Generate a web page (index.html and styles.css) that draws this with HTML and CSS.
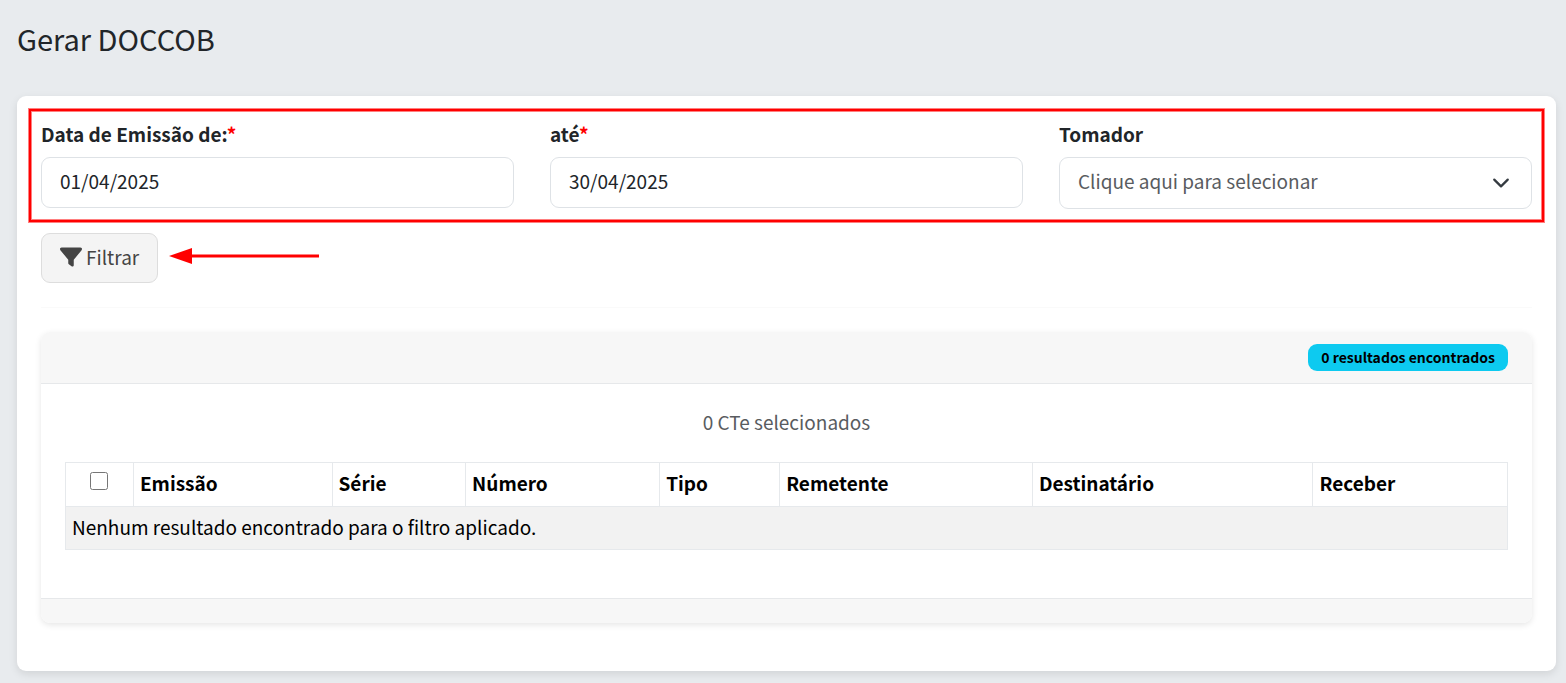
FILE: index.html
```html
<!DOCTYPE html>
<html lang="pt-BR">
<head>
  <title>Gerar DOCCOB</title>
  <meta charset="utf-8">
  <meta name="viewport" content="width=device-width, initial-scale=1.0">
  <link rel="stylesheet" href="styles.css">
</head>
<body>
<h1 class="page-title">Gerar DOCCOB</h1>
<main class="panel">
  <form class="filter">
    <div class="filter-row">
      <div class="field">
        <label for="dataDe">Data de Emissão de:<span class="required">*</span></label>
        <input id="dataDe" class="control" type="text" value="01/04/2025">
      </div>
      <div class="field">
        <label for="dataAte">até<span class="required">*</span></label>
        <input id="dataAte" class="control" type="text" value="30/04/2025">
      </div>
      <div class="field">
        <label for="tomador">Tomador</label>
        <div class="select-wrap">
          <select id="tomador" class="control">
            <option>Clique aqui para selecionar</option>
          </select>
          <svg class="chevron" viewBox="0 0 16 16" aria-hidden="true">
            <path d="M2 5l6 6 6-6" fill="none" stroke="#343a40" stroke-width="2" stroke-linecap="round" stroke-linejoin="round"/>
          </svg>
        </div>
      </div>
      <div class="highlight"></div>
    </div>
    <div class="actions">
      <button class="btn" type="button">
        <svg class="icon" viewBox="0 0 512 512" aria-hidden="true">
          <path fill="currentColor" d="M3.900 54.900C10.500 40.900 24.500 32 40 32H472c15.500 0 29.500 8.900 36.100 22.900s4.600 30.500-5.200 42.500L320 320.900V448c0 12.100-6.800 23.200-17.700 28.600s-23.800 4.300-33.500-3l-64-48c-8.100-6-12.800-15.500-12.800-25.600V320.900L9 97.300C-.7 85.400-2.800 68.800 3.900 54.900z"/>
        </svg>
        Filtrar
      </button>
      <svg class="arrow" viewBox="0 0 150 16" aria-hidden="true">
        <path d="M0 8L23 0V16z" fill="#f00"/>
        <path d="M20 8H150" stroke="#f00" stroke-width="3"/>
      </svg>
    </div>
  </form>
  <hr class="divider">
  <section class="card">
    <div class="card-header">
      <span class="badge">0 resultados encontrados</span>
    </div>
    <div class="card-body">
      <p class="selected">0 CTe selecionados</p>
      <table class="results">
        <thead>
          <tr>
            <th class="check"><input type="checkbox" aria-label="Selecionar todos"></th>
            <th>Emissão</th>
            <th>Série</th>
            <th>Número</th>
            <th>Tipo</th>
            <th>Remetente</th>
            <th>Destinatário</th>
            <th>Receber</th>
          </tr>
        </thead>
        <tbody>
          <tr>
            <td colspan="8">Nenhum resultado encontrado para o filtro aplicado.</td>
          </tr>
        </tbody>
      </table>
    </div>
    <div class="card-footer"></div>
  </section>
</main>
</body>
</html>
```

FILE: styles.css
```css
* {
  box-sizing: border-box;
}

body {
  margin: 0;
  padding: 20px 10px 12px 17px;
  background-color: #e8ebee;
  color: #212529;
  font-family: "Noto Sans CJK SC", "Open Sans", sans-serif;
  font-size: 19px;
  line-height: 28px;
}

.page-title {
  margin: 0 0 40px;
  font-size: 29px;
  font-weight: 400;
  line-height: 36px;
}

.panel {
  padding: 24px 24px 48px;
  background-color: #fff;
  border-radius: 9px;
  box-shadow: 0 3px 9px rgba(0, 0, 0, 0.1);
}

.filter-row {
  position: relative;
  display: grid;
  grid-template-columns: repeat(3, 1fr);
  gap: 36px;
}

.field label {
  display: block;
  margin-bottom: 9px;
  font-weight: 700;
}

.required {
  color: #f00;
}

.control {
  display: block;
  width: 100%;
  height: 51px;
  padding: 0 18px 4px;
  border: 1px solid #dee2e6;
  border-radius: 9px;
  background-color: #fff;
  color: #212529;
  font: inherit;
}

select.control {
  height: 52px;
  appearance: none;
  color: #595c5f;
}

.select-wrap {
  position: relative;
}

.chevron {
  position: absolute;
  top: 17px;
  right: 22px;
  width: 18px;
  height: 18px;
  pointer-events: none;
}

.highlight {
  position: absolute;
  inset: -11px -12px -13px;
  border: 2px solid #f00;
  box-shadow: 0 0 0 1px rgba(255, 0, 0, 0.5), inset 0 0 0 1px rgba(255, 0, 0, 0.5);
  pointer-events: none;
}

.actions {
  display: flex;
  align-items: center;
  gap: 11px;
  margin-top: 24px;
}

.btn {
  display: flex;
  align-items: center;
  gap: 4px;
  height: 50px;
  padding: 0 18px 2px;
  border: 1px solid #ddd;
  border-radius: 9px;
  background-color: #f4f4f4;
  color: #444;
  font: inherit;
}

.icon {
  width: 22px;
  height: 22px;
}

.arrow {
  width: 150px;
  height: 16px;
  margin-bottom: 4px;
}

.divider {
  margin: 24px 0;
  border: 0;
  border-top: 1px solid #fafafa;
}

.card {
  border-radius: 9px;
  box-shadow: 0 2px 6px rgba(0, 0, 0, 0.1);
}

.card-header {
  display: flex;
  justify-content: flex-end;
  padding: 12px 24px;
  border-bottom: 1px solid #e6e8ea;
  border-radius: 9px 9px 0 0;
  background-color: #f7f7f7;
}

.badge {
  padding: 0 13px;
  border-radius: 9px;
  background-color: #0dcaf0;
  color: #000;
  font-size: 14px;
  font-weight: 700;
  line-height: 27px;
}

.card-body {
  padding: 24px 24px 48px;
}

.selected {
  margin: 0 0 26px;
  color: #595c5f;
  text-align: center;
}

.results {
  width: 100%;
  border-collapse: collapse;
  color: #000;
}

.results th,
.results td {
  padding: 6px 6px 8px;
  border: 1px solid #e6e9ec;
  text-align: left;
}

.results th {
  padding-bottom: 9px;
}

.results td {
  background-color: #f2f2f2;
}

.results .check {
  padding: 9px 6px 0;
  text-align: center;
  vertical-align: top;
}

.results .check input {
  display: block;
  width: 18px;
  height: 18px;
  margin: 0 auto;
}

.card-footer {
  height: 25px;
  border-top: 1px solid #e6e8ea;
  border-radius: 0 0 9px 9px;
  background-color: #f7f7f7;
}
```
